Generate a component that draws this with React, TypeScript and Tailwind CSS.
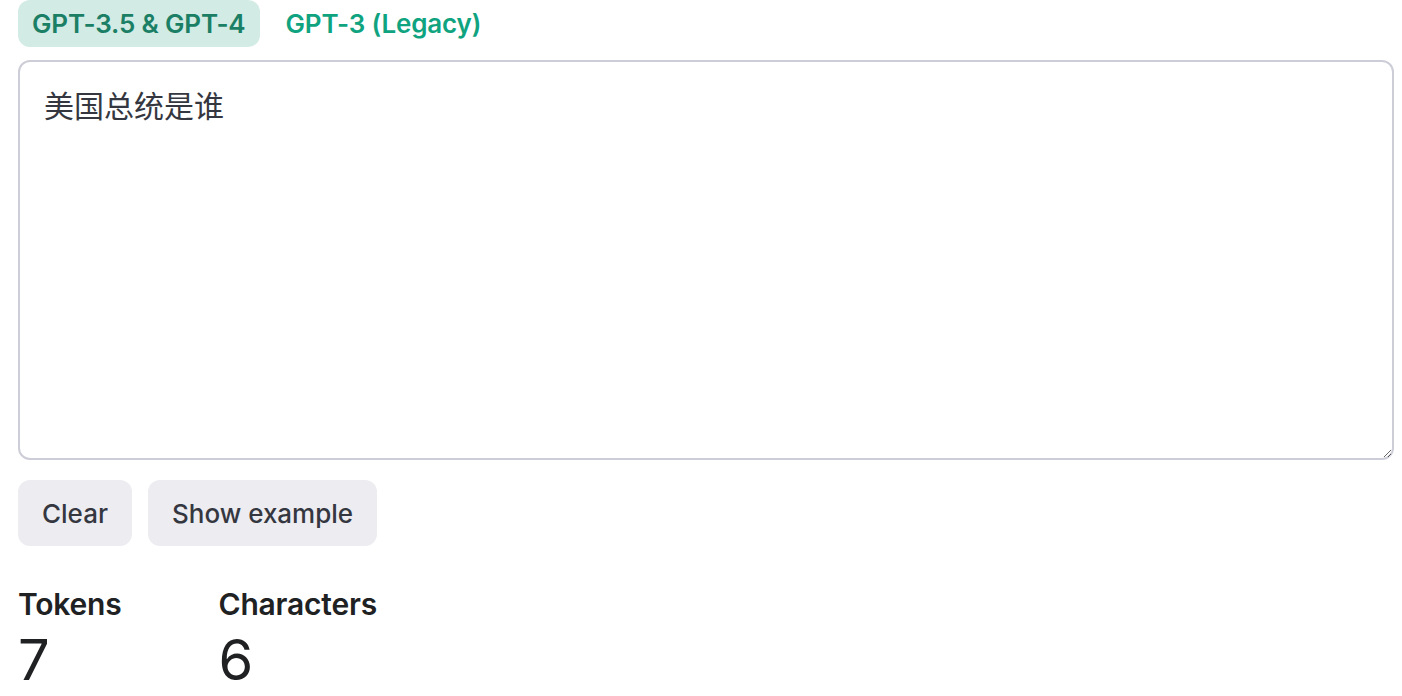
import { useState } from 'react';

const FONT = { fontFamily: 'Inter, "Noto Sans CJK SC", sans-serif' };

const App = () => {
  const [tab, setTab] = useState<'gpt4' | 'gpt3'>('gpt4');
  const [text, setText] = useState('美国总统是谁');

  return (
    <div className="min-h-screen bg-white pl-[18px] pr-[8px] text-[#353740]" style={FONT}>
      <div className="flex gap-[12px]">
        <button
          onClick={() => setTab('gpt4')}
          className={`h-[47px] rounded-[12px] px-[14px] text-[26px] font-semibold tracking-[-0.15px] ${
            tab === 'gpt4' ? 'bg-[#d2ebe4] text-[#1a7f64]' : 'text-[#10a37f]'
          }`}
        >
          GPT-3.5 &amp; GPT-4
        </button>
        <button
          onClick={() => setTab('gpt3')}
          className={`h-[47px] rounded-[12px] px-[14px] text-[26px] font-semibold tracking-[-0.15px] ${
            tab === 'gpt3' ? 'bg-[#d2ebe4] text-[#1a7f64]' : 'text-[#10a37f]'
          }`}
        >
          GPT-3 (Legacy)
        </button>
      </div>

      <textarea
        value={text}
        onChange={e => setText(e.target.value)}
        className="mt-[13px] block h-[400px] w-full rounded-[12px] border-2 border-[#cdcdd8] px-[24px] py-[22px] text-[30px] leading-[1.5] text-[#353740] outline-none"
        style={FONT}
      />

      <div className="mt-[20px] flex gap-[16px]">
        <button
          onClick={() => setText('')}
          className="h-[66px] rounded-[12px] bg-[#ececf1] px-[24px] text-[26px] font-medium text-[#353740]"
        >
          Clear
        </button>
        <button className="h-[66px] rounded-[12px] bg-[#ececf1] px-[24px] text-[26px] font-medium text-[#353740]">
          Show example
        </button>
      </div>

      <div className="mt-[40px] flex gap-[97px] text-[#202123]">
        <div>
          <div className="text-[30px] font-semibold leading-[36px] tracking-[-0.2px]">Tokens</div>
          <div className="mt-[6px] text-[56px] font-normal leading-[64px]">7</div>
        </div>
        <div>
          <div className="text-[30px] font-semibold leading-[36px] tracking-[-0.2px]">Characters</div>
          <div className="mt-[6px] text-[56px] font-normal leading-[64px]">{[...text].length}</div>
        </div>
      </div>
    </div>
  );
};

export default App;
